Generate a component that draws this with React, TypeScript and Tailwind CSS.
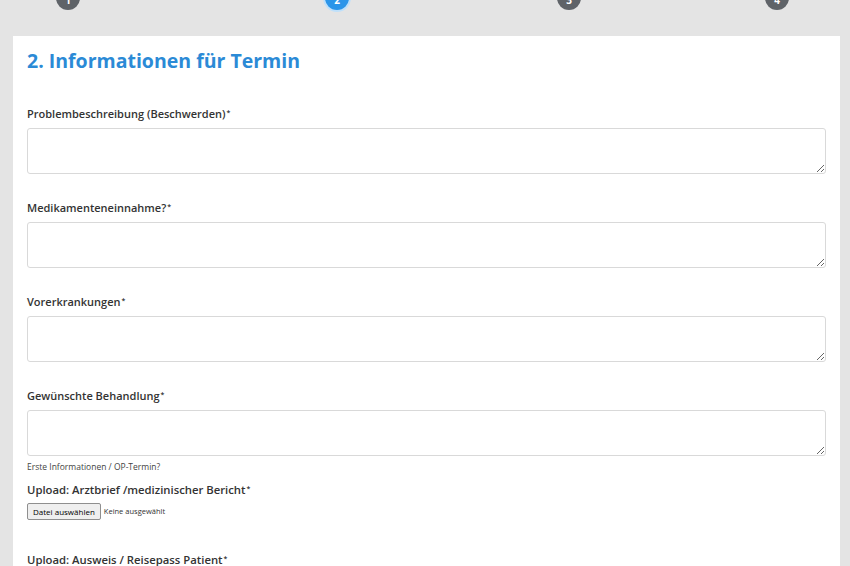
import React from 'react';

const fields = [
  { label: 'Problembeschreibung (Beschwerden)' },
  { label: 'Medikamenteneinnahme?' },
  { label: 'Vorerkrankungen' },
  { label: 'Gewünschte Behandlung', hint: 'Erste Informationen / OP-Termin?' },
];

const steps = [
  { n: 1, left: 'ml-[56px]', active: false },
  { n: 2, left: 'ml-[245px]', active: true },
  { n: 3, left: 'ml-[208px]', active: false },
  { n: 4, left: 'ml-[184px]', active: false },
];

const Label: React.FC<{ text: string; big?: boolean }> = ({ text, big }) => (
  <label className={`block text-[#333] font-semibold ${big ? 'text-[11.3px]' : 'text-[11px]'} leading-[16px]`}>
    {text}
    <sup className="text-[7px] ml-[1px] relative -top-[3px]">*</sup>
  </label>
);

export default function App() {
  return (
    <div className="w-[850px] h-[566px] overflow-hidden bg-[#e4e4e4] font-['Open_Sans',sans-serif]">
      {/* stepper */}
      <div className="h-[36px] flex items-start">
        {steps.map((s) => (
          <div
            key={s.n}
            className={`${s.left} -mt-[14px] w-[24px] h-[24px] shrink-0 rounded-full flex items-end justify-center pb-[2px] text-white text-[10px] font-bold ${
              s.active ? 'bg-[#2b95e9] ring-2 ring-[#bfe0fa]' : 'bg-[#5f6368]'
            }`}
          >
            {s.n}
          </div>
        ))}
      </div>

      {/* card */}
      <div className="ml-[13px] w-[827px] bg-white px-[14px] pt-[12px] pb-[20px]">
        <h2 className="text-[#2b8ad6] text-[19.5px] font-bold leading-[26px]">2. Informationen für Termin</h2>

        <div className="mt-[32px] flex flex-col">
          {fields.map((f, i) => (
            <div key={f.label} className={i > 0 ? 'mt-[26px]' : ''}>
              <Label text={f.label} />
              <textarea className="mt-[6px] block w-[799px] h-[46px] border border-[#d9d9d9] rounded-[3px] bg-white resize-y outline-none" />
              {f.hint && <p className="mt-[5px] text-[8.5px] text-[#444] leading-[12px]">{f.hint}</p>}
            </div>
          ))}

          <div className="mt-[9px]">
            <Label text="Upload: Arztbrief /medizinischer Bericht" big />
            <div className="mt-[5px] flex items-center gap-[3px]">
              <button className="h-[17px] px-[5px] border border-[#8f8f8f] rounded-[2px] bg-[#efefef] text-[8px] text-black leading-none">
                Datei auswählen
              </button>
              <span className="text-[7.5px] text-[#333]">Keine ausgewählt</span>
            </div>
          </div>

          <div className="mt-[32px]">
            <Label text="Upload: Ausweis / Reisepass Patient" big />
          </div>
        </div>
      </div>
    </div>
  );
}
